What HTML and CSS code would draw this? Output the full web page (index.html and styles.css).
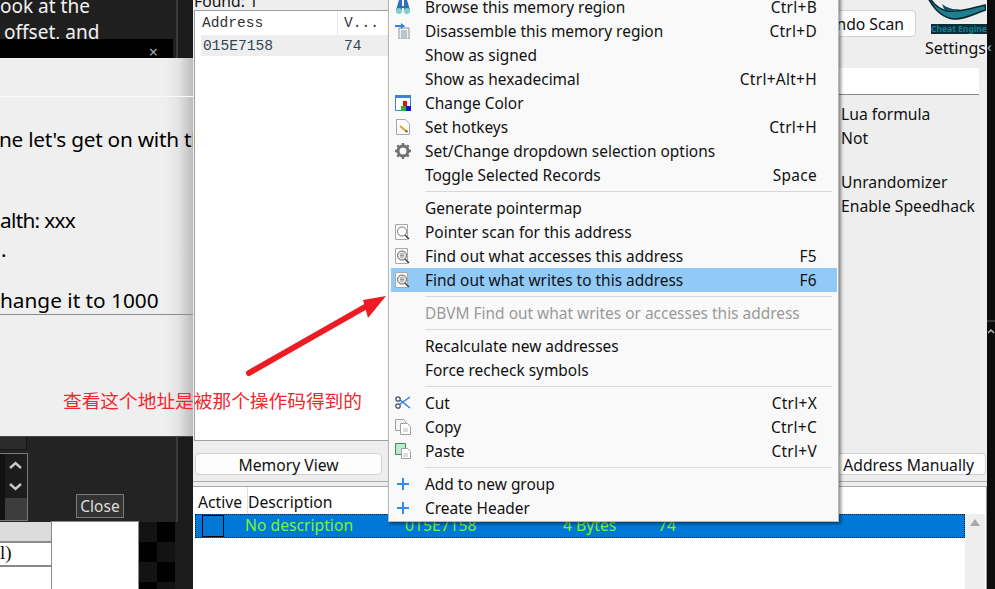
FILE: index.html
```html
<!DOCTYPE html>
<html lang="en">
<head>
<meta charset="UTF-8" />
<title>Cheat Engine tutorial</title>
<link rel="stylesheet" href="styles.css">
</head>
<body>
<div class="desktop">

  <!-- tutorial window, dark one behind -->
  <div class="tut-back">
    <div class="tut-back-text">
      <div>ook at the</div>
      <div class="second">offset, and</div>
    </div>
    <div class="tut-title"><span class="tut-x">×</span></div>
  </div>

  <div class="tut-lower">
    <div class="top-box"></div>
    <div class="spin">
      <div class="spin-arrows">
        <svg width="22" height="44" viewBox="0 0 22 44"><path d="M5 14l5.500-5 5.500 5M5 30l5.500 5 5.500-5" fill="none" stroke="#c8c8c8" stroke-width="2.400"/></svg>
      </div>
      <div class="spin-thumb"></div>
    </div>
    <button class="close-btn">Close</button>
  </div>

  <div class="tut-table">
    <div class="cell head"></div>
    <div class="cell row1">l)</div>
    <div class="cell row2"></div>
  </div>
  <div class="tut-white"></div>
  <div class="checker"></div>

  <div class="tut-dialog">
    <div class="dlg-top"></div>
    <p class="l1">ne let's get on with th</p>
    <p class="l2">alth: xxx</p>
    <p class="l3">.</p>
    <p class="l4">hange it to 1000</p>
  </div>

  <!-- main window -->
  <div class="ce">
    <div class="found">Found: 1</div>
    <div class="scan">
      <div class="results">
        <div class="res-head"><span class="c-addr">Address</span><span class="c-val">V...</span></div>
        <div class="res-row"><span class="c-addr">015E7158</span><span class="c-val">74</span></div>
      </div>
      <div class="side">
        <div class="undo-row">
          <button class="btn undo">Undo Scan</button>
          <div class="logo-box">
            <svg class="logo" width="58" height="22" viewBox="0 0 58 22"><path d="M2-2C6 5 11 9 19 11 31 13 44 8 57 5L58 10C48 13 36 20 26 19 14 18 6 9 0-2z" fill="#1d7f90" stroke="#08242b" stroke-width="1.500"/><path d="M14 4c5 4 11 6 18 5-4 3-12 3-16 0z" fill="#0f4f5c"/></svg>
            <div class="logo-name">Cheat Engine</div>
            <div class="settings">Settings</div>
          </div>
        </div>
        <div class="value-input"></div>
        <div class="opt first">Lua formula</div>
        <div class="opt">Not</div>
        <div class="opt gap">Unrandomizer</div>
        <div class="opt">Enable Speedhack</div>
      </div>
    </div>
    <div class="btn-row">
      <button class="btn mem">Memory View</button>
      <button class="btn add">Add Address Manually</button>
    </div>
    <div class="splitter"></div>
    <div class="addr-list">
      <div class="list-head"><span class="h-active">Active</span><span class="h-desc">Description</span></div>
      <div class="list-body">
        <div class="list-rows">
          <div class="list-row">
            <span class="check"></span>
            <span class="g-desc">No description</span>
            <span class="g-addr">015E7158</span>
            <span class="g-type">4 Bytes</span>
            <span class="g-val">74</span>
          </div>
        </div>
        <div class="scrollbar"><span class="up"></span></div>
      </div>
    </div>
  </div>
  <div class="right-strip">
    <span class="strip-chev">‹</span>
    <span class="strip-line"></span>
    <svg class="strip-up" width="8" height="8" viewBox="0 0 8 8"><path d="M0 6l3-3 3 3" fill="none" stroke="#bbb" stroke-width="1.500"/></svg>
  </div>

  <!-- context menu -->
  <div class="menu">
    <div class="item"><span class="ico"><svg width="16" height="16" viewBox="0 0 16 16"><path d="M4 1h3v6h2V1h3l3 10H9V9H7v2H1z" fill="#2f6fc0"/><circle cx="4" cy="12" r="3" fill="#7fd0c8"/><circle cx="12" cy="12" r="3" fill="#7fd0c8"/></svg></span><span class="lbl">Browse this memory region</span><span class="key">Ctrl+B</span></div>
    <div class="item"><span class="ico"><svg width="16" height="16" viewBox="0 0 16 16"><path d="M4 5h10v11H4z" fill="#eef1f4" stroke="#8a97a3"/><path d="M6 8h6M6 10h6M6 12h6M6 14h6" stroke="#8a97a3"/><path d="M0 3h7" stroke="#2f80e0" stroke-width="2"/><path d="M6 0l4 3-4 3z" fill="#2f80e0"/></svg></span><span class="lbl">Disassemble this memory region</span><span class="key">Ctrl+D</span></div>
    <div class="item"><span class="ico"></span><span class="lbl">Show as signed</span></div>
    <div class="item"><span class="ico"></span><span class="lbl">Show as hexadecimal</span><span class="key">Ctrl+Alt+H</span></div>
    <div class="item"><span class="ico"><svg width="16" height="16" viewBox="0 0 16 16"><path d="M.5.5h15v15H.5z" fill="#fff" stroke="#3c82d8"/><path d="M0 0h16v3H0z" fill="#3c82d8"/><path d="M8 6h4v5H8z" fill="#e01010"/><path d="M6 11h5v5H6z" fill="#30b030"/><path d="M11 11h5v5h-5z" fill="#1010d0"/></svg></span><span class="lbl">Change Color</span></div>
    <div class="item"><span class="ico"><svg width="16" height="16" viewBox="0 0 16 16"><path d="M1.5.5h9l4 4v11h-13z" fill="#fdfdfd" stroke="#a8a8a8"/><path d="M5 7l6 5" stroke="#e8a020" stroke-width="2"/><path d="M10.500 11.500l2 1.500" stroke="#606060" stroke-width="2"/></svg></span><span class="lbl">Set hotkeys</span><span class="key">Ctrl+H</span></div>
    <div class="item"><span class="ico"><svg width="16" height="16" viewBox="0 0 16 16"><circle cx="8" cy="8" r="5" fill="none" stroke="#707070" stroke-width="3"/><path d="M8 0v3M8 13v3M0 8h3M13 8h3M2.300 2.300l2 2M11.700 11.700l2 2M13.700 2.300l-2 2M4.300 11.700l-2 2" stroke="#707070" stroke-width="2.400"/></svg></span><span class="lbl">Set/Change dropdown selection options</span></div>
    <div class="item"><span class="ico"></span><span class="lbl">Toggle Selected Records</span><span class="key">Space</span></div>
    <div class="sep"></div>
    <div class="item"><span class="ico"></span><span class="lbl">Generate pointermap</span></div>
    <div class="item"><span class="ico"><svg width="16" height="16" viewBox="0 0 16 16"><path d="M.5.5h12v15H.5z" fill="#fafafa" stroke="#a8a8a8"/><circle cx="7" cy="7.500" r="4.500" fill="#fff" stroke="#777"/><path d="M10 11l4 4" stroke="#444" stroke-width="1.500"/></svg></span><span class="lbl">Pointer scan for this address</span></div>
    <div class="item"><span class="ico"><svg width="16" height="16" viewBox="0 0 16 16"><path d="M.5.500h12v15H.5z" fill="#fafafa" stroke="#a8a8a8"/><circle cx="7" cy="7.500" r="4.500" fill="#e8e8e8" stroke="#666"/><path d="M5 7.500h4M5 6h4M5 9h4" stroke="#999"/><path d="M10 11l4 4" stroke="#444" stroke-width="1.500"/></svg></span><span class="lbl">Find out what accesses this address</span><span class="key">F5</span></div>
    <div class="item on"><span class="ico"><svg width="16" height="16" viewBox="0 0 16 16"><path d="M.5.500h12v15H.5z" fill="#fafafa" stroke="#a8a8a8"/><circle cx="7" cy="7.500" r="4.500" fill="#e8e8e8" stroke="#666"/><path d="M5 7.500h4M5 6h4M5 9h4" stroke="#999"/><path d="M10 11l4 4" stroke="#444" stroke-width="1.500"/></svg></span><span class="lbl">Find out what writes to this address</span><span class="key">F6</span></div>
    <div class="sep"></div>
    <div class="item off"><span class="ico"></span><span class="lbl">DBVM Find out what writes or accesses this address</span></div>
    <div class="sep"></div>
    <div class="item"><span class="ico"></span><span class="lbl">Recalculate new addresses</span></div>
    <div class="item"><span class="ico"></span><span class="lbl">Force recheck symbols</span></div>
    <div class="sep"></div>
    <div class="item"><span class="ico"><svg width="16" height="16" viewBox="0 0 16 16"><path d="M15 2L5 9M15 13L5 5" stroke="#2f80e0" stroke-width="1.500"/><circle cx="3" cy="4" r="2.200" fill="none" stroke="#456" stroke-width="1.300"/><circle cx="3" cy="11" r="2.200" fill="none" stroke="#456" stroke-width="1.300"/></svg></span><span class="lbl">Cut</span><span class="key">Ctrl+X</span></div>
    <div class="item"><span class="ico"><svg width="16" height="16" viewBox="0 0 16 16"><path d="M.5.500h8l2 2v9H.5z" fill="#f4f4f4" stroke="#a0a0a0"/><path d="M5.500 4.500h7l3 3v8h-10z" fill="#fff" stroke="#a0a0a0"/><path d="M8 10h5M8 12h5" stroke="#bbb"/></svg></span><span class="lbl">Copy</span><span class="key">Ctrl+C</span></div>
    <div class="item"><span class="ico"><svg width="16" height="16" viewBox="0 0 16 16"><path d="M.5.500h10v11H.5z" fill="#bfe8cf" stroke="#2f8f6a"/><path d="M6.500 5.500h6l3 3v7h-9z" fill="#fff" stroke="#a0a0a0"/><path d="M8 11h5M8 13h5" stroke="#bbb"/></svg></span><span class="lbl">Paste</span><span class="key">Ctrl+V</span></div>
    <div class="sep"></div>
    <div class="item"><span class="ico"><svg width="16" height="16" viewBox="0 0 16 16"><path d="M8 2v12M2 8h12" stroke="#2f8fe8" stroke-width="2"/></svg></span><span class="lbl">Add to new group</span></div>
    <div class="item"><span class="ico"><svg width="16" height="16" viewBox="0 0 16 16"><path d="M8 2v12M2 8h12" stroke="#2f8fe8" stroke-width="2"/></svg></span><span class="lbl">Create Header</span></div>
  </div>

  <!-- red annotation drawn on the screenshot -->
  <svg class="arrow" width="995" height="589" viewBox="0 0 995 589"><path d="M249 373L372 303" stroke="#ed1c24" stroke-width="6" stroke-linecap="round"/><path d="M386 296L363 300L368 318z" fill="#ed1c24"/></svg>
  <div class="note">查看这个地址是被那个操作码得到的</div>
</div>
</body>
</html>
```
FILE: styles.css
```css
* {
  box-sizing: border-box;
}
body {
  margin: 0;
  background: #1b1b1b;
  font-family: "Noto Sans", "Noto Sans CJK SC", sans-serif;
  font-size: 15.7px;
  color: #111;
}
.desktop {
  position: relative;
  width: 995px;
  height: 589px;
  overflow: hidden;
}

/* tutorial windows */
.tut-back {
  position: absolute;
  left: 0;
  top: 0;
  width: 178px;
  height: 60px;
  background: #1f1f1f;
  border-right: 2px solid #3a3a3a;
  color: #f2f2f2;
  font-size: 19px;
  line-height: 26px;
}
.tut-back-text {
  height: 46px;
  margin-top: -7px;
  overflow: hidden;
}
.tut-back-text .second {
  padding-left: 4px;
}
.tut-title {
  height: 21px;
  width: 173px;
  background: #000;
  text-align: right;
  padding-right: 15px;
  line-height: 24px;
}
.tut-x {
  color: #aaa;
  font-size: 16px;
}
.tut-dialog {
  position: absolute;
  left: 0;
  top: 58px;
  width: 193px;
  height: 379px;
  overflow: hidden;
  white-space: nowrap;
  background: linear-gradient(to right, #efefef 165px, #e4e4e4 178px, #bdbdbd 193px);
  border-bottom: 1px solid #444;
  font-size: 20.800px;
  line-height: 28px;
  color: #000;
}
.dlg-top {
  height: 39px;
  border-bottom: 1px solid #f9f9f9;
}
.tut-dialog p {
  margin: 0;
}
.tut-dialog .l1 {
  margin-top: 28px;
  margin-left: -1px;
  letter-spacing: -0.25px;
}
.tut-dialog .l2 {
  margin-top: 53px;
  letter-spacing: -0.7px;
}
.tut-dialog .l3 {
  margin-top: 1px;
  margin-left: 1px;
}
.tut-dialog .l4 {
  margin-top: 23px;
  border-bottom: 1px solid #8c8c8c;
  height: 29px;
}
.tut-lower {
  position: absolute;
  left: 0;
  top: 437px;
  width: 178px;
  height: 85px;
  background: #232323;
  border-right: 2px solid #3a3a3a;
}
.top-box {
  width: 27px;
  height: 13px;
  background: #2b2b2b;
  border: 1px solid #151515;
  border-left: 0;
  border-top: 0;
}
.spin {
  width: 28px;
  height: 68px;
  margin-top: 3px;
  background: #111;
  border: 1px solid #7a7a7a;
  border-left: 0;
  padding-left: 5px;
}
.spin-arrows {
  height: 44px;
  background: #1c1c1c;
}
.spin-arrows svg {
  display: block;
}
.spin-thumb {
  height: 22px;
  background: #3d3d3d;
}
.close-btn {
  position: absolute;
  left: 76px;
  top: 57px;
  width: 48px;
  height: 24px;
  padding: 0;
  background: #333;
  border: 1px solid #7a7a7a;
  color: #ddd;
  font-family: inherit;
  font-size: 15.500px;
  line-height: 20px;
}
.tut-table {
  position: absolute;
  left: 0;
  top: 522px;
  width: 51px;
  height: 67px;
  background: #8a8a8a;
}
.tut-table .cell {
  background: #fff;
  height: 22px;
  margin-bottom: 2px;
  line-height: 20px;
  font-family: "Liberation Serif", serif;
  font-size: 19px;
  color: #111;
}
.tut-table .head {
  height: 19px;
  background: #dcdcdc;
}
.tut-white {
  position: absolute;
  left: 51px;
  top: 521px;
  width: 88px;
  height: 68px;
  background: #fff;
  border: 1px solid #8a8a8a;
  border-bottom: 0;
}
.checker {
  position: absolute;
  left: 139px;
  top: 522px;
  width: 36px;
  height: 67px;
  background: repeating-conic-gradient(#000 0 25%, #131313 0 50%) 0 0 / 36px 40px;
}

/* main window */
.ce {
  position: absolute;
  left: 193px;
  top: 0;
  width: 794px;
  height: 589px;
  background: #eee;
  display: flex;
  flex-direction: column;
}
.found {
  height: 10px;
  padding-left: 1px;
  line-height: 2px;
  overflow: hidden;
}
.scan {
  display: flex;
  height: 431px;
}
.results {
  flex: none;
  width: 195px;
  margin-left: 1px;
  background: #fff;
  border: 1px solid #a0a0a0;
  font-family: "Liberation Mono", monospace;
  font-size: 14.600px;
}
.res-head {
  display: flex;
  height: 24px;
  line-height: 24px;
  color: #333;
}
.res-row {
  display: flex;
  height: 21px;
  line-height: 22px;
  margin-left: 6px;
  background: #eee;
  color: #345;
}
.c-addr {
  width: 143px;
  flex: none;
}
.res-head .c-addr {
  padding-left: 7px;
  margin-right: 6px;
  border-right: 1px solid #e6e6e6;
}
.res-row .c-addr {
  padding-left: 2px;
}
.side {
  flex: 1;
  padding-left: 452px;
}
.undo-row {
  display: flex;
  height: 58px;
}
.btn {
  background: #fdfdfd;
  border: 1px solid #d0d0d0;
  border-radius: 4px;
  font-family: inherit;
  font-size: 15.700px;
  color: #111;
  padding: 0;
  white-space: nowrap;
}
.undo {
  flex: none;
  width: 96px;
  height: 27px;
  margin-left: -21px;
  text-align: right;
  padding-right: 11px;
}
.logo-box {
  flex: none;
  width: 64px;
  margin-left: 7px;
  margin-top: -10px;
}
.logo {
  display: block;
  margin-left: 5px;
}
.logo-name {
  width: 56px;
  margin-left: 8px;
  margin-top: 2px;
  height: 10px;
  background: #0a2f38;
  color: #157f92;
  font-size: 8.500px;
  font-weight: 700;
  line-height: 10px;
  text-align: center;
  white-space: nowrap;
  overflow: hidden;
}
.settings {
  margin-left: 2px;
  margin-top: 3px;
  font-size: 16px;
  line-height: 22px;
  white-space: nowrap;
}
.value-input {
  height: 27px;
  width: 145px;
  margin-left: -7px;
  background: #fff;
  border-bottom: 1px solid #888;
}
.opt {
  height: 24px;
  line-height: 24px;
  white-space: nowrap;
}
.opt.first {
  margin-top: 7px;
}
.opt.gap {
  margin-top: 20px;
}
.btn-row {
  display: flex;
  justify-content: space-between;
  height: 40px;
  padding: 12px 1px 0 2px;
}
.mem {
  width: 187px;
  height: 22px;
}
.add {
  width: 230px;
  height: 22px;
  text-align: right;
  padding-right: 11px;
}
.splitter {
  height: 6px;
  border-top: 1px solid #aaa;
  border-bottom: 1px solid #aaa;
}
.addr-list {
  flex: 1;
  background: #fff;
  border-right: 1px solid #999;
}
.list-head {
  display: flex;
  height: 27px;
  line-height: 30px;
}
.h-active {
  width: 55px;
  padding-left: 5px;
  border-right: 1px solid #e0e0e0;
  overflow: hidden;
}
.list-body {
  display: flex;
  height: 75px;
}
.list-rows {
  width: 772px;
  padding-left: 2px;
}
.list-row {
  position: relative;
  height: 24px;
  background: #0078d7;
  outline: 1px dotted #123;
  outline-offset: -1px;
  color: #7cf52a;
  line-height: 22px;
  white-space: nowrap;
}
.check {
  position: absolute;
  left: 7px;
  top: 1px;
  width: 22px;
  height: 22px;
  border: 1px solid #000;
}
.list-row span:not(.check) {
  position: absolute;
  top: 0;
}
.list-row .g-desc { left: 50px; }
.list-row .g-addr { left: 210px; }
.list-row .g-type { left: 368px; }
.list-row .g-val { left: 463px; }
.scrollbar {
  width: 20px;
  background: #eee;
  padding: 5px 0 0 5px;
}
.up {
  display: block;
  width: 0;
  height: 0;
  border: 5px solid transparent;
  border-bottom: 7px solid #a8a8a8;
  border-top: 0;
}
.right-strip {
  position: absolute;
  left: 987px;
  top: 0;
  width: 8px;
  height: 589px;
  background: #0c0c0c;
}
.strip-chev {
  position: absolute;
  left: 0;
  top: 36px;
  color: #aaa;
  font-size: 15px;
  line-height: 20px;
}
.strip-line {
  position: absolute;
  left: 0;
  top: 320px;
  width: 8px;
  height: 2px;
  background: #333;
}
.strip-up {
  position: absolute;
  left: 1px;
  top: 327px;
}

/* context menu */
.menu {
  position: absolute;
  left: 388px;
  top: -5px;
  width: 451px;
  height: 527px;
  padding: 0 1px 0 2px;
  background: #f9f9f9;
  border: 1px solid #b8b8b8;
  border-top: 0;
  box-shadow: 2px 2px 3px rgba(0,0,0,0.45);
  font-size: 15.450px;
}
.item {
  display: flex;
  align-items: center;
  height: 24px;
}
.item.on {
  background: #91c9f7;
}
.item.off {
  color: #9a9a9a;
}
.ico {
  width: 34px;
  flex: none;
  padding-left: 4px;
  height: 16px;
}
.ico svg {
  display: block;
}
.lbl {
  flex: 1;
  white-space: nowrap;
}
.key {
  padding-right: 20px;
  letter-spacing: 0.3px;
  white-space: nowrap;
}
.sep {
  height: 9px;
  margin-left: 34px;
  background: linear-gradient(#d8d8d8, #d8d8d8) no-repeat 0 4px / calc(100% - 5px) 1px;
}

/* annotation */
.arrow {
  position: absolute;
  left: 0;
  top: 0;
}
.note {
  position: absolute;
  left: 63px;
  top: 386px;
  color: #f0282d;
  font-family: "Noto Sans CJK SC", sans-serif;
  font-size: 18.700px;
  line-height: 28px;
  white-space: nowrap;
}
```
